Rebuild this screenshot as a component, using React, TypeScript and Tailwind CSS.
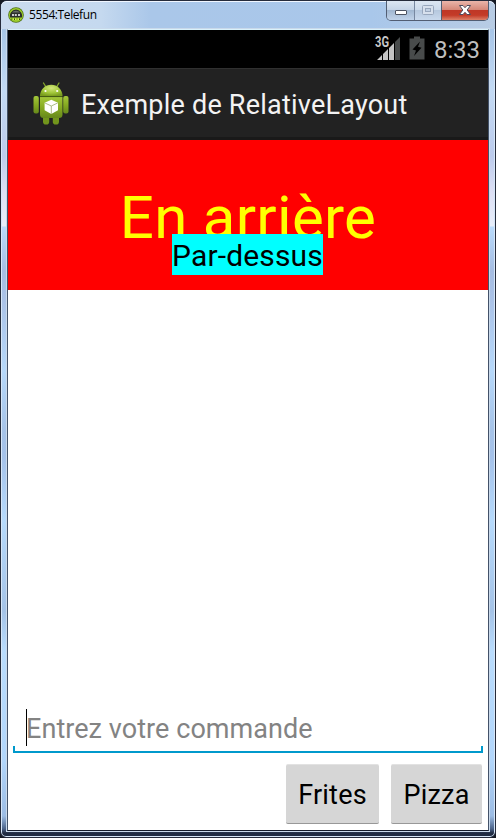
import React from "react";

function AndroidLogo() {
  return (
    <svg width="36" height="44" viewBox="0 0 36 44" className="block">
      <defs>
        <linearGradient id="body" x1="0" y1="0" x2="0" y2="1">
          <stop offset="0" stopColor="#a3c73a" />
          <stop offset="0.5" stopColor="#87ab22" />
          <stop offset="1" stopColor="#66881a" />
        </linearGradient>
        <radialGradient id="head" cx="0.5" cy="0.3" r="0.7">
          <stop offset="0" stopColor="#d3e67c" />
          <stop offset="0.6" stopColor="#a2c83a" />
          <stop offset="1" stopColor="#7a9d1f" />
        </radialGradient>
      </defs>
      <path d="M10.5 1 L13 5 M26 1 L23.5 5" stroke="#86a82b" strokeWidth="1.3" strokeLinecap="round" />
      <rect x="10" y="32" width="6.2" height="10.5" rx="2.8" fill="#72951c" />
      <rect x="19.8" y="32" width="6.2" height="10.5" rx="2.8" fill="#72951c" />
      <rect x="0.5" y="14" width="5.3" height="17.5" rx="2" fill="url(#body)" />
      <rect x="30.2" y="14" width="5.3" height="17.5" rx="2" fill="url(#body)" />
      <path d="M7 14 A11.2 11.2 0 0 1 29.5 14 Z" fill="url(#head)" />
      <path d="M7 15 H29.5 V32.5 Q29.5 36 26 36 H10.5 Q7 36 7 32.5 Z" fill="url(#body)" />
      <path d="M7 14.6 H29.5" stroke="#4f6c10" strokeWidth="0.9" />
      <circle cx="12.5" cy="9" r="1.1" fill="#fff" />
      <circle cx="24.2" cy="9" r="1.1" fill="#fff" />
      <path d="M18.3 17.8 L25 20.7 V28.3 L18.3 32 L11.6 28.3 V20.7 Z" fill="#fff" />
      <path d="M11.8 20.9 L18.3 24 L24.8 20.9 M18.3 24 V32" stroke="#a3b67b" strokeWidth="0.9" fill="none" />
    </svg>
  );
}

function EmulatorIcon() {
  return (
    <svg width="16" height="16" viewBox="0 0 16 16" className="block">
      <circle cx="8" cy="8" r="7.8" fill="#4c6e16" />
      <circle cx="8" cy="8" r="7.1" fill="#9ccb2c" />
      <path d="M2.2 10.6 A6.1 6.1 0 1 1 13.8 10.6 Z" fill="#2c2e2c" />
      <path d="M4 5.5 A4.6 3.6 0 0 1 12 5.5 Z" fill="#666b66" />
      <path d="M4 8 H6.2 M7 8 H8.8 M10 8 H12" stroke="#fff" strokeWidth="1.5" />
      <path d="M3.5 12.3 H12.5" stroke="#314b0b" strokeWidth="1.6" strokeDasharray="1 1.5" />
      <path d="M4.5 12.3 H12" stroke="#d8f54c" strokeWidth="1.4" strokeDasharray="1.5 1" />
    </svg>
  );
}

function WindowControls() {
  return (
    <div className="flex h-[20px] w-[103px] overflow-hidden rounded-b-[5px] border border-t-0 border-[#525e73]">
      <div className="flex w-7 items-start justify-center border-r border-[#7787a0] bg-[linear-gradient(#dce6f2_0,#c4d3e6_48%,#a1b7d1_50%,#c1d3e9_100%)] pt-[9px]">
        <svg width="12" height="6" viewBox="0 0 12 6">
          <rect x="0.5" y="0.5" width="11" height="4" rx="0.5" fill="#fff" stroke="#4d5361" />
        </svg>
      </div>
      <div className="flex w-[27px] items-start justify-center border-r border-[#525e73] bg-[linear-gradient(#dce6f2_0,#cbd9eb_48%,#b6c8de_50%,#c9d9ed_100%)] pt-1">
        <svg width="12" height="10" viewBox="0 0 12 10">
          <rect x="0.5" y="0.5" width="11" height="9" rx="1" fill="#d7e0ed" stroke="#98a7bd" />
          <rect x="3.5" y="3.5" width="5" height="3" fill="#c2d1e4" stroke="#98a7bd" />
        </svg>
      </div>
      <div className="flex flex-1 items-start justify-center bg-[linear-gradient(#eab5aa_0,#d6897a_45%,#bf3726_50%,#c43b28_75%,#dc8068_100%)] pt-1">
        <svg width="12" height="10" viewBox="0 0 12 10">
          <path d="M0.5 0.5 H4 L6 2.7 L8 0.5 H11.5 L8.2 5 L11.5 9.5 H8 L6 7.3 L4 9.5 H0.5 L3.8 5 Z" fill="#fff" stroke="#4d4b5c" strokeWidth="1" strokeLinejoin="round" />
        </svg>
      </div>
    </div>
  );
}

function StatusBar() {
  return (
    <div className="flex h-[38px] shrink-0 items-start justify-end bg-black pr-2">
      <svg width="26" height="24" viewBox="0 0 26 24" className="mt-[6px] overflow-visible">
        <path d="M2 24 L7 19 V24 Z M8 24 V18 L13 13 V24 Z M14 24 V12 L19 7 V24 Z" fill="#c4c4c4" />
        <path d="M20 24 V6 L25 1 V24 Z" fill="#484b4b" />
        <text x="0" y="11" fill="#c8c8c8" stroke="#000" strokeWidth="1.5" paintOrder="stroke" fontSize="14" fontWeight="700" fontFamily="Roboto, sans-serif" textLength="14" lengthAdjust="spacingAndGlyphs">3G</text>
      </svg>
      <svg width="16" height="24" viewBox="0 0 16 24" className="ml-2 mt-[6px]">
        <path d="M5 0.5 H11 V2.5 H15.5 V23.5 H0.5 V2.5 H5 Z" fill="#484b4b" />
        <path d="M11 5.5 L3.5 13.5 L7 14.5 L5 20 L12.5 11.8 L9 10.8 Z" fill="#000" />
      </svg>
      <span className="ml-[9px] mt-[6px] w-[46px] whitespace-nowrap text-[24px] leading-[28px] tracking-[-0.1px] text-[#bebebe]">8:33</span>
    </div>
  );
}

function ActionBar() {
  return (
    <div className="flex h-[72px] shrink-0 items-start border-b-[3px] border-t border-b-[#191919] border-t-[#303030] bg-[#222222]">
      <div className="ml-[25px] mt-[13px]"><AndroidLogo /></div>
      <h1 className="ml-3 mt-[20px] whitespace-nowrap text-[27px] font-normal leading-[32px] tracking-[0.22px] text-[#f3f3f3]">Exemple de RelativeLayout</h1>
    </div>
  );
}

function Button({ children, className }: { children: React.ReactNode; className: string }) {
  return (
    <button className={`h-[60px] rounded-[2px] border-b border-t border-b-[#989898] border-t-[#e2e2e2] bg-[#d6d6d6] pt-[2px] text-[27px] leading-[32px] tracking-[0.2px] text-black ${className}`}>
      {children}
    </button>
  );
}

export default function App() {
  return (
    <div className="flex h-[838px] w-[496px] flex-col overflow-hidden bg-[#151923] font-[Roboto,sans-serif]">
      <div className="flex flex-1 flex-col rounded-b-[6px] rounded-t-[7px] border border-[#252b3b] bg-[linear-gradient(#b6cde9_0,#a8c6e8_30px,#c3daf4_90px,#bccbec_155px,#dcdff4_190px,#e8eefa_225px,#b9dafb_226px,#a6bde2_270px,#abc3e8_300px,#b6d8fa_370px,#a6c3e8_430px,#a5c2ea_455px,#b6dafc_520px,#a5c3e7_610px,#b9dcfd_650px,#b2d6fb_760px,#9cbce4_815px,#4a6288_828px,#202c43_832px)] shadow-[inset_0_0_0_1px_#d6e6f8]">
        <header className="flex h-7 shrink-0 items-start justify-between rounded-t-[6px] border-t border-[#f0f6ff] bg-[linear-gradient(90deg,#cadbef_0,#c5d9ef_100px,#aac7e9_150px,#a9c7ea_370px,#b8cce4_494px)] pl-[7px] pr-[6px]">
          <div className="flex items-center pt-[5px]">
            <EmulatorIcon />
            <span className="ml-[5px] whitespace-nowrap font-['Open_Sans',sans-serif] text-[12px] leading-4 tracking-[-0.4px] text-black">5554:Telefun</span>
          </div>
          <div className="-mt-px"><WindowControls /></div>
        </header>
        <main className="mx-[6px] mb-[6px] flex flex-1 flex-col border border-b-[#151c2b] border-l-[#435269] border-r-[#435269] border-t-[#d9f1fa] bg-white shadow-[0_0_0_1px_#c9d9eb]">
          <StatusBar />
          <ActionBar />
          <section className="relative h-[150px] shrink-0 bg-[#ff0000] pt-[43px] text-center">
            <div className="whitespace-nowrap text-[60px] leading-[70px] tracking-[0.3px] text-[#ffff00]">En arrière</div>
            <div className="absolute left-[164px] top-[94px] h-[41px] w-[151px] whitespace-nowrap bg-[#00ffff] pt-1 text-[30px] leading-[35px] tracking-[0.15px] text-black">Par-dessus</div>
          </section>
          <section className="flex flex-1 flex-col justify-end">
            <div className="mx-[5px] flex h-[44px] shrink-0 flex-col">
              <div className="ml-[13px] h-[37px] border-l border-black pt-[4px]">
                <span className="-ml-px block whitespace-nowrap text-[27px] leading-[32px] tracking-[0.06px] text-[#838383]">Entrez votre commande</span>
              </div>
              <div className="h-[7px] border-x-2 border-b-2 border-[#0099cc]" />
            </div>
            <div className="mb-[6px] mr-[6px] mt-[11px] flex h-[60px] shrink-0 justify-end gap-3">
              <Button className="w-[93px]">Frites</Button>
              <Button className="w-[91px]">Pizza</Button>
            </div>
          </section>
        </main>
      </div>
    </div>
  );
}
